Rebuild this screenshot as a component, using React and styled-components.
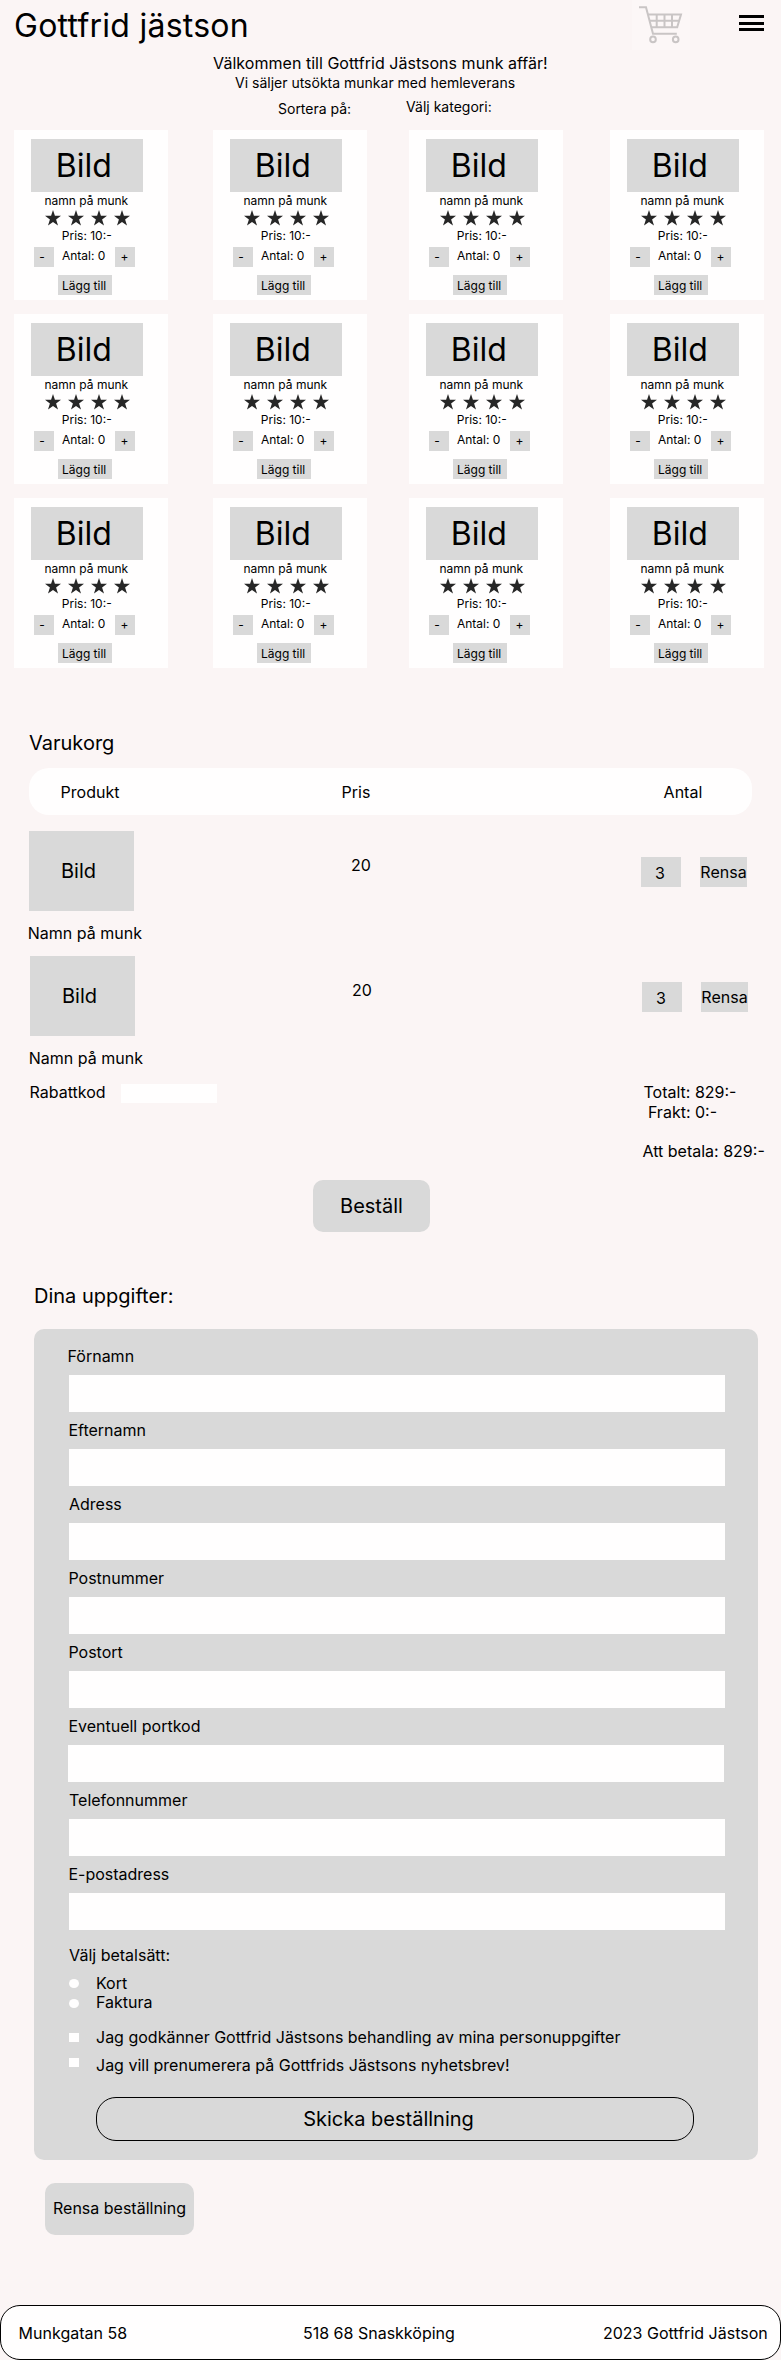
import React from "react";
import styled, { createGlobalStyle } from "styled-components";

const Global = createGlobalStyle`
  * { box-sizing: border-box; }
  body {
    margin: 0;
    background: #fbf5f5;
    color: #000;
    font-family: Inter, "Liberation Sans", sans-serif;
    font-size: 16px;
    line-height: 20px;
  }
  button, input { font: inherit; color: inherit; border: 0; border-radius: 0; padding: 0; margin: 0; appearance: none; }
`;

const Page = styled.div`
  width: 781px;
  height: 2360px;
  display: flex;
  flex-direction: column;
  overflow: hidden;
  white-space: nowrap;
`;

const Header = styled.header`
  display: flex;
  align-items: flex-start;
  height: 53px;
  padding: 0 17px 0 14px;
`;
const SiteTitle = styled.h1`
  margin: 6px 0 0;
  flex: 1;
  font-size: 32px;
  font-weight: 400;
  line-height: 39px;
  letter-spacing: 0.25px;
`;
const CartLink = styled.a`
  display: block;
  width: 58px;
  height: 50px;
  margin-right: 49px;
  padding: 6px 0 0 7px;
  background: #fcf7f7;
  svg { display: block; }
`;
const MenuButton = styled.button`
  display: flex;
  flex-direction: column;
  justify-content: space-between;
  width: 25px;
  height: 16px;
  margin-top: 15px;
  background: none;
  span { width: 100%; height: 3px; background: #000; }
`;

const Intro = styled.section`
  height: 77px;
`;
const Welcome = styled.p`
  margin: 0 0 0 213px;
  line-height: 20px;
  letter-spacing: 0.03px;
`;
const Tagline = styled.p`
  margin: 1px 0 0 235px;
  font-size: 14px;
  line-height: 17px;
`;
const Filters = styled.div`
  display: flex;
  gap: 54px;
  margin: 7px 0 0 278px;
  font-size: 14px;
  line-height: 17px;
`;
const Filter = styled.span`
  width: ${(p) => p.$w || "auto"};
  padding-top: ${(p) => p.$drop || 0}px;
`;

const Products = styled.section`
  display: grid;
  grid-template-columns: 199px 196px 201px 154px;
  row-gap: 14px;
  padding-left: 14px;
`;
const Card = styled.article`
  width: 154px;
  height: 170px;
  padding: 9px 0 0 17px;
  background: #fffefe;
  font-size: 12px;
  line-height: 15px;
`;
const CardImage = styled.div`
  width: 112px;
  height: 53px;
  padding: 7px 0 0 24.8px;
  background: #d9d9d9;
  font-size: 32px;
  line-height: 39px;
`;
const CardName = styled.div`
  margin: 1px 0 0 13.5px;
`;
const Stars = styled.div`
  display: flex;
  gap: 7px;
  margin: 1.5px 0 0 14.4px;
  svg { display: block; }
`;
const Price = styled.div`
  margin: 2.5px 0 0 30.8px;
`;
const Stepper = styled.div`
  display: flex;
  margin: 4px 0 0 3px;
`;
const StepButton = styled.button`
  width: 20px;
  height: 20px;
  padding: 0 0 1px ${(p) => p.$inset}px;
  line-height: 15px;
  text-align: left;
  background: #d9d9d9;
`;
const Count = styled.span`
  width: 61px;
  padding: 1px 0 0 8px;
`;
const AddButton = styled.button`
  display: block;
  width: 54px;
  height: 20px;
  margin: 8px 0 0 27px;
  padding: 1px 0 0 4px;
  line-height: 15px;
  text-align: left;
  background: #d9d9d9;
`;

const Heading = styled.h2`
  margin: 0;
  font-size: 20px;
  font-weight: 400;
  line-height: 24px;
`;

const Basket = styled.section`
  height: 512px;
  padding: 63px 0 0 29px;
`;
const BasketHead = styled.div`
  display: flex;
  width: 723px;
  height: 47px;
  margin-top: 13px;
  padding: 14px 0 0 31.6px;
  border-radius: 20px;
  background: #fffefe;
  span:nth-child(1) { width: 281px; }
  span:nth-child(2) { width: 322px; }
`;
const BasketRows = styled.div`
  padding-top: 16px;
`;
const BasketRow = styled.div`
  display: flex;
  height: 125px;
  margin-left: ${(p) => p.$shift}px;
`;
const Item = styled.div`
  width: 322px;
`;
const ItemImage = styled.div`
  width: 105px;
  height: 80px;
  padding: 28px 0 0 32px;
  background: #d9d9d9;
  font-size: 20px;
  line-height: 24px;
`;
const ItemName = styled.div`
  margin: 12px 0 0 -1.2px;
`;
const ItemPrice = styled.div`
  width: 290px;
  padding-top: 24px;
`;
const Quantity = styled.input`
  width: 40px;
  height: 30px;
  margin: 26px 19px 0 0;
  padding: 2px 0 0 14px;
  background: #d9d9d9;
`;
const ClearButton = styled.button`
  width: 47px;
  height: 30px;
  margin-top: 26px;
  padding-bottom: 1px;
  background: #d9d9d9;
`;
const Summary = styled.div`
  display: flex;
  margin-top: 1px;
`;
const Discount = styled.label`
  display: flex;
  width: 613.5px;
`;
const DiscountInput = styled.input`
  width: 96px;
  height: 19px;
  margin: 2px 0 0 auto;
  background: #fffefe;
`;
const DiscountField = styled.span`
  display: flex;
  width: 188px;
  padding-left: 0.5px;
`;
const Totals = styled.div`
  display: flex;
  flex-direction: column;
`;
const Total = styled.span`
  margin: ${(p) => p.$gap || 0}px 0 0 ${(p) => p.$inset || 0}px;
`;

const OrderButton = styled.button`
  width: 117px;
  height: 52px;
  margin-left: 313px;
  flex: none;
  border-radius: 10px;
  background: #d9d9d9;
  font-size: 20px;
`;

const Details = styled.section`
  padding: 52px 0 0 34px;
`;
const Form = styled.form`
  width: 724px;
  height: 831px;
  margin-top: 21px;
  padding: 17px 0 0 35px;
  border-radius: 10px;
  background: #d9d9d9;
`;
const Field = styled.label`
  display: block;
  height: 74px;
  margin-left: ${(p) => p.$shift || 0}px;
  span { display: block; margin-left: ${(p) => p.$labelShift || 0}px; }
`;
const FieldInput = styled.input`
  display: block;
  width: 656px;
  height: 37px;
  margin-top: 9px;
  background: #fffefe;
`;
const PayTitle = styled.div`
  margin-top: 7px;
`;
const Payments = styled.div`
  margin-top: 8px;
`;
const Option = styled.label`
  display: flex;
  height: ${(p) => p.$h}px;
`;
const Radio = styled.input`
  width: 10px;
  height: 9px;
  margin: ${(p) => p.$drop}px 17px 0 0;
  border-radius: 50%;
  background: #fffefe;
`;
const Checkbox = styled.input`
  width: 10px;
  height: 9px;
  margin: ${(p) => p.$drop}px 17px 0 0;
  background: #fffefe;
`;
const Consents = styled.div`
  margin-top: 15px;
`;
const SubmitButton = styled.button`
  width: 598px;
  height: 44px;
  margin: 2px 0 0 27px;
  padding: 0 13px 0 0;
  border: 1px solid #000;
  border-radius: 20px;
  background: none;
  font-size: 20px;
`;
const ResetButton = styled.button`
  width: 149px;
  height: 52px;
  margin: 23px 0 0 45px;
  padding-bottom: 2px;
  flex: none;
  border-radius: 10px;
  background: #d9d9d9;
`;

const Footer = styled.footer`
  display: flex;
  height: 55px;
  margin-top: auto;
  padding: 17px 0 0 17.6px;
  border: 1px solid #000;
  border-radius: 20px;
  background: #fffefe;
  span:nth-child(1) { width: 284.4px; }
  span:nth-child(2) { width: 300px; }
`;

function Cart() {
  return (
    <svg width="44" height="38" viewBox="0 0 44 38" fill="none" stroke="#c9c5c5" strokeWidth="2">
      <path d="M0 1.3H7L14 27.7H37.8" />
      <path d="M9 8.5H42L38.2 21.3H12.4M10.7 14.8H40" />
      <path d="M17.7 8.5V21.3M25.5 8.5V21.3M33 8.5V21.3" />
      <circle cx="14" cy="33.4" r="2.8" />
      <circle cx="36.7" cy="33.4" r="2.8" />
    </svg>
  );
}

function Star() {
  return (
    <svg width="16" height="16" viewBox="0 0 15 15">
      <path fill="#262626" d="M7.5 0L9.3 5.5H15L10.4 9L12.2 14.6L7.5 11.2L2.8 14.6L4.6 9L0 5.5H5.7Z" />
    </svg>
  );
}

function ProductCard() {
  return (
    <Card>
      <CardImage>Bild</CardImage>
      <CardName>namn på munk</CardName>
      <Stars>{[0, 1, 2, 3].map((i) => <Star key={i} />)}</Stars>
      <Price>Pris: 10:-</Price>
      <Stepper>
        <StepButton $inset={5.2}>-</StepButton>
        <Count>Antal: 0</Count>
        <StepButton $inset={5.6}>+</StepButton>
      </Stepper>
      <AddButton>Lägg till</AddButton>
    </Card>
  );
}

const fields = [
  { label: "Förnamn", labelShift: -1.5 },
  { label: "Efternamn", labelShift: -0.6 },
  { label: "Adress" },
  { label: "Postnummer", labelShift: -0.6 },
  { label: "Postort", labelShift: -0.6 },
  { label: "Eventuell portkod", shift: -1, labelShift: 0.4 },
  { label: "Telefonnummer" },
  { label: "E-postadress", labelShift: -0.6 },
];

export default function App() {
  return (
    <>
      <Global />
      <Page>
        <Header>
          <SiteTitle>Gottfrid jästson</SiteTitle>
          <CartLink><Cart /></CartLink>
          <MenuButton><span /><span /><span /></MenuButton>
        </Header>
        <Intro>
          <Welcome>Välkommen till Gottfrid Jästsons munk affär!</Welcome>
          <Tagline>Vi säljer utsökta munkar med hemleverans</Tagline>
          <Filters>
            <Filter $w="74px" $drop={2}>Sortera på:</Filter>
            <Filter>Välj kategori:</Filter>
          </Filters>
        </Intro>
        <Products>
          {Array.from({ length: 12 }, (_, i) => <ProductCard key={i} />)}
        </Products>
        <Basket>
          <Heading>Varukorg</Heading>
          <BasketHead>
            <span>Produkt</span>
            <span>Pris</span>
            <span>Antal</span>
          </BasketHead>
          <BasketRows>
            {[0, 1].map((i) => (
              <BasketRow key={i} $shift={i}>
                <Item>
                  <ItemImage>Bild</ItemImage>
                  <ItemName>Namn på munk</ItemName>
                </Item>
                <ItemPrice>20</ItemPrice>
                <Quantity defaultValue="3" />
                <ClearButton>Rensa</ClearButton>
              </BasketRow>
            ))}
          </BasketRows>
          <Summary>
            <Discount>
              <DiscountField>Rabattkod<DiscountInput /></DiscountField>
            </Discount>
            <Totals>
              <Total $inset={1}>Totalt: 829:-</Total>
              <Total $inset={5.4}>Frakt: 0:-</Total>
              <Total $gap={19}>Att betala: 829:-</Total>
            </Totals>
          </Summary>
        </Basket>
        <OrderButton>Beställ</OrderButton>
        <Details>
          <Heading>Dina uppgifter:</Heading>
          <Form>
            {fields.map((f) => (
              <Field key={f.label} $shift={f.shift} $labelShift={f.labelShift}>
                <span>{f.label}</span>
                <FieldInput />
              </Field>
            ))}
            <PayTitle>Välj betalsätt:</PayTitle>
            <Payments>
              <Option $h={19}><Radio type="radio" name="pay" $drop={6} />Kort</Option>
              <Option $h={20}><Radio type="radio" name="pay" $drop={7} />Faktura</Option>
            </Payments>
            <Consents>
              <Option $h={28}><Checkbox type="checkbox" $drop={6} />Jag godkänner Gottfrid Jästsons behandling av mina personuppgifter</Option>
              <Option $h={40}><Checkbox type="checkbox" $drop={3} />Jag vill prenumerera på Gottfrids Jästsons nyhetsbrev!</Option>
            </Consents>
            <SubmitButton type="button">Skicka beställning</SubmitButton>
          </Form>
        </Details>
        <ResetButton>Rensa beställning</ResetButton>
        <Footer>
          <span>Munkgatan 58</span>
          <span>518 68 Snaskköping</span>
          <span>2023 Gottfrid Jästson</span>
        </Footer>
      </Page>
    </>
  );
}
